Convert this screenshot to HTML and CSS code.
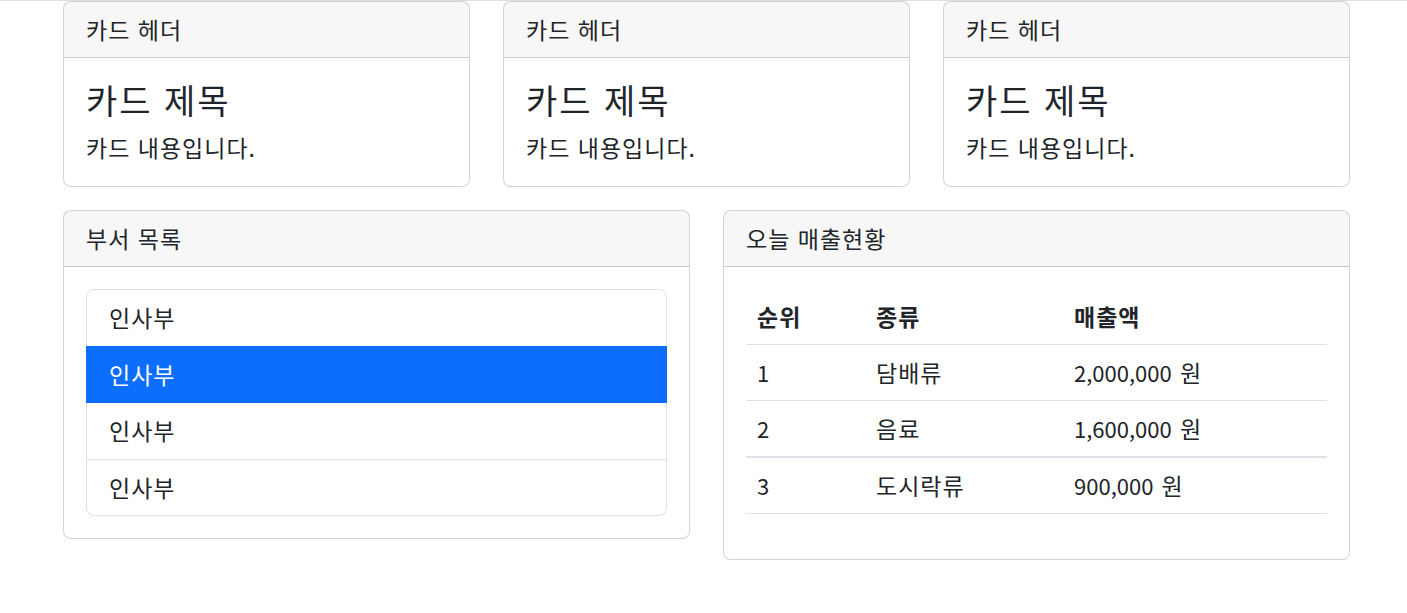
FILE: index.html
```html
<!DOCTYPE html>
<html lang="ko">
<head>
<meta charset="utf-8">
<title>카드</title>
<link rel="stylesheet" href="styles.css">
</head>
<body>
<div class="topline"></div>
<div class="container">
  <div class="row3">
    <div class="card">
      <div class="card-header ko">카드 헤더</div>
      <div class="card-body">
        <h4 class="card-title">카드 제목</h4>
        <p class="card-text ko">카드 내용입니다.</p>
      </div>
    </div>
    <div class="card">
      <div class="card-header ko">카드 헤더</div>
      <div class="card-body">
        <h4 class="card-title">카드 제목</h4>
        <p class="card-text ko">카드 내용입니다.</p>
      </div>
    </div>
    <div class="card">
      <div class="card-header ko">카드 헤더</div>
      <div class="card-body">
        <h4 class="card-title">카드 제목</h4>
        <p class="card-text ko">카드 내용입니다.</p>
      </div>
    </div>
  </div>
  <div class="row2">
    <div class="card">
      <div class="card-header ko">부서 목록</div>
      <div class="card-body">
        <ul class="list-group">
          <li class="list-item ko">인사부</li>
          <li class="list-item ko active">인사부</li>
          <li class="list-item ko">인사부</li>
          <li class="list-item ko">인사부</li>
        </ul>
      </div>
    </div>
    <div class="card">
      <div class="card-header ko">오늘 매출현황</div>
      <div class="card-body">
        <table class="table">
          <thead>
            <tr><th class="col-rank ko">순위</th><th class="col-kind ko">종류</th><th class="ko">매출액</th></tr>
          </thead>
          <tbody>
            <tr><td>1</td><td class="ko">담배류</td><td>2,000,000 <span class="won">원</span></td></tr>
            <tr><td>2</td><td class="ko">음료</td><td>1,600,000 <span class="won">원</span></td></tr>
            <tr class="divider"><td>3</td><td class="ko">도시락류</td><td>900,000 <span class="won">원</span></td></tr>
          </tbody>
        </table>
      </div>
    </div>
  </div>
</div>
</body>
</html>
```
FILE: styles.css
```css
html, body {
  margin: 0;
  padding: 0;
  background: #fff;
}
body {
  font-family: "Noto Sans CJK KR", "Noto Sans", sans-serif;
  font-size: 22px;
  line-height: 33px;
  color: #212529;
}
.ko {
  font-size: 23px;
  letter-spacing: 1px;
}
.won {
  font-size: 23px;
  margin-left: 2px;
}
.topline {
  height: 0;
  border-bottom: 1px solid #dedede;
}
.container {
  width: 1287px;
  margin-left: 63px;
}
.row3 {
  display: grid;
  grid-template-columns: repeat(3, 1fr);
  gap: 33px;
}
.row2 {
  display: grid;
  grid-template-columns: 1fr 1fr;
  gap: 33px;
  margin-top: 23px;
  align-items: start;
}
.card {
  border: 1px solid rgba(0, 0, 0, 0.175);
  border-radius: 8px;
  overflow: hidden;
  background: #fff;
}
.card-header {
  padding: 11px 22px;
  background: rgba(0, 0, 0, 0.03);
  border-bottom: 1px solid rgba(0, 0, 0, 0.175);
}
.card-body {
  padding: 22px;
}
.card-title {
  margin: 0 0 11px;
  font-size: 34px;
  letter-spacing: 2px;
  line-height: 40px;
  font-weight: 400;
}
.card-text {
  margin: 0;
}
.list-group {
  list-style: none;
  margin: 0;
  padding: 0;
}
.list-item {
  padding: 11px 22px;
  line-height: 33.5px;
  border: 1px solid #dee2e6;
  background: #fff;
}
.list-item + .list-item {
  border-top-width: 0;
}
.list-item:first-child {
  border-top-left-radius: 8px;
  border-top-right-radius: 8px;
}
.list-item:last-child {
  border-bottom-left-radius: 8px;
  border-bottom-right-radius: 8px;
}
.list-item.active {
  margin-top: -1px;
  border-top-width: 1px;
  background: #0d6efd;
  border-color: #0d6efd;
  color: #fff;
}
.table {
  width: 100%;
  border-collapse: collapse;
  margin-bottom: 23px;
}
.table th,
.table td {
  padding: 11px;
  text-align: left;
  border-bottom: 1px solid #dee2e6;
  vertical-align: top;
}
.table th {
  font-weight: 700;
}
.col-rank {
  width: 97px;
}
.col-kind {
  width: 176px;
}
.table tr.divider td {
  border-top: 2px solid #dee2e6;
}
```
